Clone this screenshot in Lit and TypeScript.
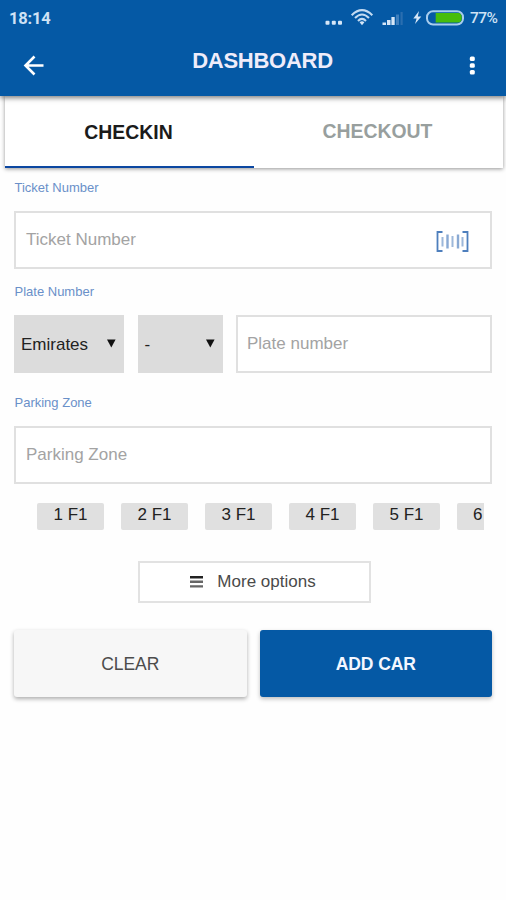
import { LitElement, html, css } from "lit";
import { customElement } from "lit/decorators.js";

@customElement("app-root")
export class AppRoot extends LitElement {
  static styles = css`
    :host {
      display: block;
      height: 900px;
      overflow: hidden;
      background: #fefefe;
      font-family: "Liberation Sans", Arial, sans-serif;
      font-size: 17px;
      color: #222;
    }
    * { box-sizing: border-box; }
    svg { display: block; flex: none; }
    .header {
      height: 96px;
      background: #0559a5;
      box-shadow: 0 2px 5px rgba(0, 0, 0, 0.5);
      position: relative;
      color: #fff;
    }
    .status {
      height: 36px;
      display: flex;
      align-items: center;
      justify-content: space-between;
      padding: 0 8px 0 9px;
      font-family: Roboto, sans-serif;
      font-weight: 500;
      color: #cfe2f5;
    }
    .clock { font-size: 16.5px; letter-spacing: -0.2px; font-weight: 700; }
    .tray { display: flex; align-items: center; }
    .pct { width: 28px; margin-left: 6px; font-size: 15.5px; letter-spacing: -0.5px; white-space: nowrap; }
    .bar {
      height: 60px;
      display: grid;
      grid-template-columns: 68px 1fr 68px;
      align-items: center;
      justify-items: center;
    }
    .title {
      margin: 0 0 11px 19px;
      justify-self: center;
      font-size: 22px;
      letter-spacing: -0.25px;
      line-height: 26px;
      font-weight: 700;
      color: #efecfa;
    }
    .tabs {
      display: flex;
      margin: 0 3px 0 5px;
      height: 71.5px;
      background: #fff;
      box-shadow: 0 1px 4px rgba(0, 0, 0, 0.42);
    }
    .tab {
      flex: 1;
      text-align: center;
      font-size: 19.4px;
      line-height: 71px;
      font-weight: 700;
      color: #989f9e;
      padding-right: 2px;
    }
    .tab.active { color: #1b1b1b; line-height: 73px; border-bottom: 2.5px solid #0b47a1; }
    .form { padding: 0 14px; }
    .label { font-size: 13px; line-height: 16px; color: #6a90c9; padding-left: 0.5px; }
    .l1 { margin: 12px 0 15px; }
    .l2 { margin: 15px 0 15px; }
    .l3 { margin: 22px 0 15px; }
    .field {
      height: 58px;
      border: 2px solid #e0e0e0;
      background: #fff;
      color: #a3a3a3;
      display: flex;
      align-items: center;
      justify-content: space-between;
      padding: 0 21px 0 10px;
    }
    .plate .field { padding-left: 9px; }
    .plate { display: grid; grid-template-columns: 110px 85px 1fr; column-gap: 13.5px; }
    .select {
      height: 58px;
      background: #dcdcdc;
      display: flex;
      align-items: center;
      justify-content: space-between;
      padding: 2px 8px 0 7px;
    }
    .select svg { margin-bottom: 3px; }
    .chips {
      display: flex;
      gap: 17px;
      overflow: hidden;
      margin: 19px 8px 0 23px;
      height: 28px;
    }
    .chip {
      flex: none;
      width: 67px;
      height: 27px;
      border-radius: 2px;
      background: #e0e0e0;
      line-height: 23px;
      text-align: center;
    }
    .chip.last { width: 27px; text-align: left; padding-left: 16px; border-radius: 2px 0 0 2px; }
    .more {
      width: 233px;
      height: 42px;
      margin: 30px auto 0 124px;
      border: 2px solid #e2e2e2;
      background: #fff;
      display: flex;
      align-items: center;
      justify-content: center;
      gap: 14px;
      padding-right: 3px;
      color: #4a4a4a;
    }
    .actions { display: grid; grid-template-columns: 1fr 1fr; gap: 13px; margin-top: 27px; }
    .btn {
      height: 67px;
      border-radius: 3px;
      display: flex;
      align-items: center;
      justify-content: center;
      padding-top: 2px;
      font-size: 17.5px;
      letter-spacing: -0.1px;
      background: #f7f7f7;
      color: #4c4c4c;
      box-shadow: 0 2px 4px rgba(0, 0, 0, 0.32);
    }
    .btn.primary {
      background: #0559a5;
      color: #f4f7ff;
      font-weight: 700;
      box-shadow: 0 2px 4px rgba(0, 0, 0, 0.25);
    }
    .scan { margin-top: 5px; }
  `;

  private chips = ["1 F1", "2 F1", "3 F1", "4 F1", "5 F1", "6"];

  private caret() {
    return html`<svg width="9" height="9" viewBox="0 0 9 9"><path d="M0 0.5H8.6L4.3 8.5Z" fill="#111" /></svg>`;
  }

  render() {
    return html`
      <div class="header">
        <div class="status">
          <span class="clock">18:14</span>
          <div class="tray">
            <svg width="142" height="36" viewBox="0 0 142 36" fill="#d6e6f7">
              <rect x="3.5" y="20.7" width="4" height="4" rx="1" />
              <rect x="9.8" y="20.7" width="4" height="4" rx="1" />
              <rect x="16" y="20.7" width="4" height="4" rx="1" />
              <g fill="none" stroke="#c3dbf2" stroke-width="2.1">
                <path d="M29.7 15.2Q40 5.2 50.3 15.2" />
                <path d="M33 18Q40 11 47 18" />
                <path d="M36 20.9Q40 17 44 20.9" />
              </g>
              <path d="M37.6 22.3Q40 20.4 42.4 22.3L40 25.2Z" />
              <rect x="60.5" y="22.5" width="3.5" height="2.5" />
              <rect x="65" y="20" width="3.5" height="5" />
              <rect x="69.4" y="17" width="3.3" height="8" />
              <rect x="74" y="14.5" width="3" height="10.5" fill="#3f7fbd" />
              <rect x="78.5" y="12" width="2.2" height="13" fill="#2a6eb0" />
              <path d="M97 11L91.3 18.4H94.6L93 24L99.3 16.4H95.8Z" />
              <rect x="105" y="11.3" width="36" height="13.2" rx="6" fill="none" stroke="#a9cdee" stroke-width="2" />
              <path d="M113.7 13H136Q139.8 13 139.8 17.8T136 22.6H113.7Z" fill="#47bd0b" />
            </svg>
            <span class="pct">77%</span>
          </div>
        </div>
        <div class="bar">
          <svg width="22" height="22" viewBox="0 0 22 22" fill="none" stroke="#fff" stroke-width="2.6"><path d="M20.5 10.5H3M11.5 1.5L2.5 10.5L11.5 19.5" /></svg>
          <h1 class="title">DASHBOARD</h1>
          <svg width="6" height="20" viewBox="0 0 6 20" fill="#fff"><rect x="0.8" y="0.5" width="5" height="4.6" rx="1.5" /><rect x="0.8" y="7.2" width="5" height="4.6" rx="1.5" /><rect x="0.8" y="13.9" width="5" height="4.6" rx="1.5" /></svg>
        </div>
      </div>
      <div class="tabs">
        <div class="tab active">CHECKIN</div>
        <div class="tab">CHECKOUT</div>
      </div>
      <div class="form">
        <div class="label l1">Ticket Number</div>
        <div class="field">
          <span>Ticket Number</span>
          <svg class="scan" width="33" height="22" viewBox="0 0 33 22" fill="none">
            <path d="M6.5 1H1.5V20H6.5M26.5 1H31.5V20H26.5" stroke="#4e7fbd" stroke-width="1.8" />
            <path d="M6.5 6V15.5M16.5 5V16M26.5 6V15.5" stroke="#9db8da" stroke-width="2" />
            <path d="M11.5 3.5V17.5M22 3.5V17.5" stroke="#89a9d3" stroke-width="2.4" />
          </svg>
        </div>
        <div class="label l2">Plate Number</div>
        <div class="plate">
          <div class="select"><span>Emirates</span>${this.caret()}</div>
          <div class="select"><span>-</span>${this.caret()}</div>
          <div class="field"><span>Plate number</span></div>
        </div>
        <div class="label l3">Parking Zone</div>
        <div class="field"><span>Parking Zone</span></div>
        <div class="chips">
          ${this.chips.map((c, i) => html`<div class="chip ${i === 5 ? "last" : ""}">${c}</div>`)}
        </div>
        <div class="more">
          <svg width="13" height="12" viewBox="0 0 13 12"><path d="M0 0H13V2.5H0Z" fill="#222" /><path d="M0 4.6H13V7H0ZM0 9.2H13V11.5H0Z" fill="#666" /></svg>
          <span>More options</span>
        </div>
        <div class="actions">
          <div class="btn">CLEAR</div>
          <div class="btn primary">ADD CAR</div>
        </div>
      </div>
    `;
  }
}
